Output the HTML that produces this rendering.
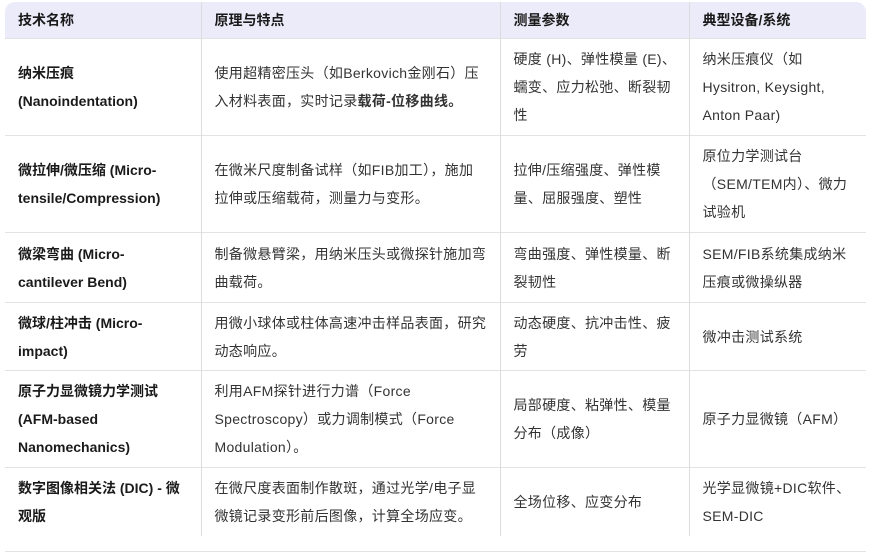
<!DOCTYPE html>
<html><head><meta charset="utf-8"><style>
html,body{margin:0;padding:0;background:#fff;width:869px;height:558px;overflow:hidden}
body{font-family:"Liberation Sans","Noto Sans CJK SC",sans-serif;font-size:14px;color:#333;letter-spacing:0.3px}
table{position:absolute;left:5px;top:2px;border-collapse:collapse;table-layout:fixed;width:861px}
th{background:#ecebfa;font-weight:bold;color:#1a1a1a;text-align:left;height:36px;padding:0 13px;letter-spacing:0}
th:first-child{border-top-left-radius:10px}
th:last-child{border-top-right-radius:10px}
td{padding:0 13px;line-height:28px;vertical-align:middle;border-top:1px solid #e3e3e3;white-space:nowrap}
td+td,th+th{border-left:1px solid #dcdcdc}
td:first-child{font-weight:bold;color:#1a1a1a;letter-spacing:0}
.line{position:absolute;left:5px;top:551px;width:861px;height:1px;background:#e3e3e3}
</style></head><body>
<table>
<colgroup><col style="width:196px"><col style="width:299px"><col style="width:189px"><col style="width:177px"></colgroup>
<tr><th>技术名称</th><th>原理与特点</th><th>测量参数</th><th>典型设备/系统</th></tr>
<tr style="height:97px"><td>纳米压痕<br>(Nanoindentation)</td><td>使用超精密压头（如Berkovich金刚石）压<br>入材料表面，实时记录<b>载荷-位移曲线。</b></td><td>硬度 (H)、弹性模量 (E)、<br>蠕变、应力松弛、断裂韧<br>性</td><td>纳米压痕仪（如<br>Hysitron, Keysight,<br>Anton Paar)</td></tr>
<tr style="height:97px"><td>微拉伸/微压缩 (Micro-<br>tensile/Compression)</td><td>在微米尺度制备试样（如FIB加工），施加<br>拉伸或压缩载荷，测量力与变形。</td><td>拉伸/压缩强度、弹性模<br>量、屈服强度、塑性</td><td>原位力学测试台<br>（SEM/TEM内）、微力<br>试验机</td></tr>
<tr style="height:70px"><td>微梁弯曲 (Micro-<br>cantilever Bend)</td><td>制备微悬臂梁，用纳米压头或微探针施加弯<br>曲载荷。</td><td>弯曲强度、弹性模量、断<br>裂韧性</td><td>SEM/FIB系统集成纳米<br>压痕或微操纵器</td></tr>
<tr style="height:68px"><td>微球/柱冲击 (Micro-<br>impact)</td><td>用微小球体或柱体高速冲击样品表面，研究<br>动态响应。</td><td>动态硬度、抗冲击性、疲<br>劳</td><td>微冲击测试系统</td></tr>
<tr style="height:97px"><td>原子力显微镜力学测试<br>(AFM-based<br>Nanomechanics)</td><td>利用AFM探针进行力谱（Force<br>Spectroscopy）或力调制模式（Force<br>Modulation）。</td><td>局部硬度、粘弹性、模量<br>分布（成像）</td><td>原子力显微镜（AFM）</td></tr>
<tr style="height:68px"><td>数字图像相关法 (DIC) - 微<br>观版</td><td>在微尺度表面制作散斑，通过光学/电子显<br>微镜记录变形前后图像，计算全场应变。</td><td>全场位移、应变分布</td><td>光学显微镜+DIC软件、<br>SEM-DIC</td></tr>
</table>
<div class="line"></div>
</body></html>
